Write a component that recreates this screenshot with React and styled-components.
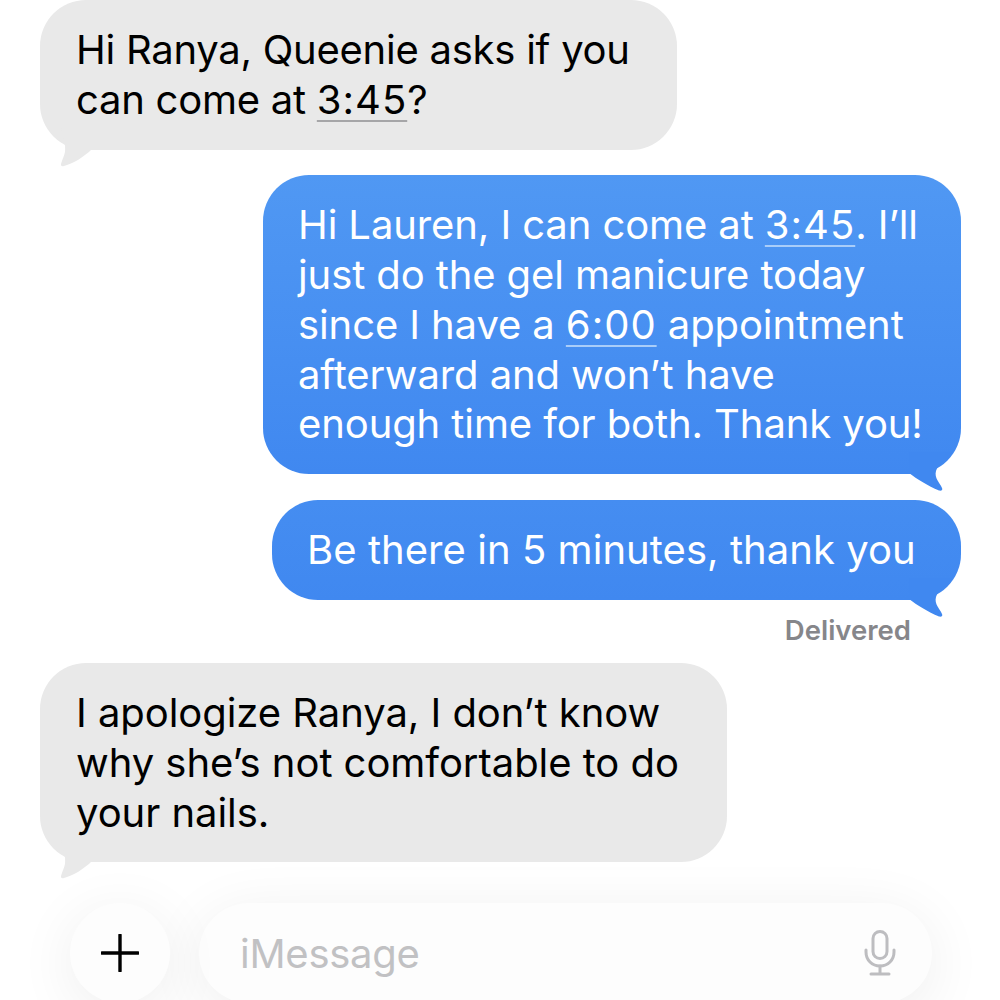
import React from "react";
import styled, { createGlobalStyle } from "styled-components";

const GlobalStyle = createGlobalStyle`
    html, body {
        margin: 0;
        padding: 0;
        background: #fff;
    }
`;

const Screen = styled.div`
    position: relative;
    width: 1000px;
    height: 1000px;
    overflow: hidden;
    background: #fff;
    font-family: Inter, "Liberation Sans", sans-serif;
    font-size: 40px;
    line-height: 49.8px;
    display: flex;
    flex-direction: column;
`;

const Feed = styled.div`
    display: flex;
    flex-direction: column;
    padding: 0 39px 0 40px;
`;

const Bubble = styled.div`
    position: relative;
    align-self: ${(p) => (p.$mine ? "flex-end" : "flex-start")};
    width: ${(p) => p.$width}px;
    box-sizing: border-box;
    padding: 25px 0 25px ${(p) => p.$inset}px;
    margin-top: ${(p) => p.$gap || 0}px;
    border-radius: 46px;
    white-space: nowrap;
    letter-spacing: ${(p) => p.$tracking}px;
    color: ${(p) => (p.$mine ? "#fff" : "#000")};
    background: ${(p) => (p.$mine ? `linear-gradient(${p.$top}, ${p.$bottom})` : "#e9e9e9")};
`;

const Tail = styled.svg`
    position: absolute;
    bottom: -18px;
    ${(p) => (p.$mine ? "right: -2px;" : "left: 18px;")}
    width: 54px;
    height: 40px;
    fill: ${(p) => p.$color};
`;

const TimeLink = styled.span`
    letter-spacing: 1px;
    text-decoration: underline;
    text-decoration-thickness: 2px;
    text-underline-offset: 6px;
    text-decoration-color: ${(p) => (p.$mine ? "#a9cdf9" : "#a6a6a8")};
`;

const Receipt = styled.div`
    align-self: flex-end;
    margin: 16px 50px 18.5px 0;
    font-size: 27.5px;
    line-height: 29px;
    font-weight: 600;
    color: #86868a;
`;

const Composer = styled.div`
    flex: 1;
    padding: 41px 68px 0 70px;
    display: flex;
    gap: 29px;
`;

const RoundButton = styled.div`
    position: relative;
    z-index: 1;
    flex: none;
    width: 100px;
    height: 100px;
    border-radius: 50%;
    background: #fdfdfd;
    box-shadow: 0 10px 60px rgba(0, 0, 0, 0.07);
    display: flex;
    align-items: center;
    justify-content: center;
`;

const Field = styled.div`
    flex: 1;
    height: 100px;
    border-radius: 50px;
    background: #fdfdfd;
    box-shadow: 0 10px 60px rgba(0, 0, 0, 0.07);
    box-sizing: border-box;
    padding: 0 36px 0 41px;
    display: flex;
    align-items: center;
    justify-content: space-between;
`;

const Placeholder = styled.span`
    color: #c1c1c3;
    letter-spacing: -0.25px;
`;

function ReceivedTail() {
    return (
        <Tail $color="#e9e9e9" viewBox="0 0 54 40">
            <path d="M3 0 C5 8 8 16 7 24 C6 29 3 34 3 37 C3 38 4 38.5 6 38 C16 35 26 29 34 21 L40 0 Z" />
        </Tail>
    );
}

function SentTail({ color }) {
    return (
        <Tail $mine $color={color} viewBox="0 0 54 40">
            <path d="M43 0 C40 7 29 11 27 19 C25 26 31 31 33 36 C34 38 32.5 39 30 38.5 C19 34 8 27 0 21 L0 0 Z" />
        </Tail>
    );
}

function App() {
    return (
        <Screen>
            <GlobalStyle />
            <Feed>
                <Bubble $width={637} $inset={36} $tracking={-0.25}>
                    Hi Ranya, Queenie asks if you
                    <br />
                    can come at <TimeLink>3:45</TimeLink>?
                    <ReceivedTail />
                </Bubble>

                <Bubble $mine $width={698} $inset={35} $gap={25.6} $tracking={-0.1} $top="#5098f3" $bottom="#4088f0">
                    Hi Lauren, I can come at <TimeLink $mine>3:45</TimeLink>. I’ll
                    <br />
                    just do the gel manicure today
                    <br />
                    since I have a <TimeLink $mine>6:00</TimeLink> appointment
                    <br />
                    afterward and won’t have
                    <br />
                    enough time for both. Thank you!
                    <SentTail color="#4088f0" />
                </Bubble>

                <Bubble $mine $width={689} $inset={35} $gap={25.6} $tracking={0.05} $top="#458df1" $bottom="#4088f0">
                    Be there in 5 minutes, thank you
                    <SentTail color="#4088f0" />
                </Bubble>

                <Receipt>Delivered</Receipt>

                <Bubble $width={687} $inset={36} $tracking={-0.05}>
                    I apologize Ranya, I don’t know
                    <br />
                    why she’s not comfortable to do
                    <br />
                    your nails.
                    <ReceivedTail />
                </Bubble>
            </Feed>

            <Composer>
                <RoundButton>
                    <svg width="38" height="38" viewBox="0 0 38 38">
                        <path d="M19 1 V37 M1 19 H37" stroke="#000" strokeWidth="3.4" strokeLinecap="round" />
                    </svg>
                </RoundButton>
                <Field>
                    <Placeholder>iMessage</Placeholder>
                    <svg width="32" height="46" viewBox="0 0 32 46" fill="none" stroke="#bdbdc0" strokeWidth="3" strokeLinecap="round">
                        <rect x="9" y="1.5" width="14" height="27" rx="7" />
                        <path d="M2 20 V22 C2 30 8 36 16 36 C24 36 30 30 30 22 V20" />
                        <path d="M16 36 V43.5 M7 44 H25" />
                    </svg>
                </Field>
            </Composer>
        </Screen>
    );
}

export default App;
